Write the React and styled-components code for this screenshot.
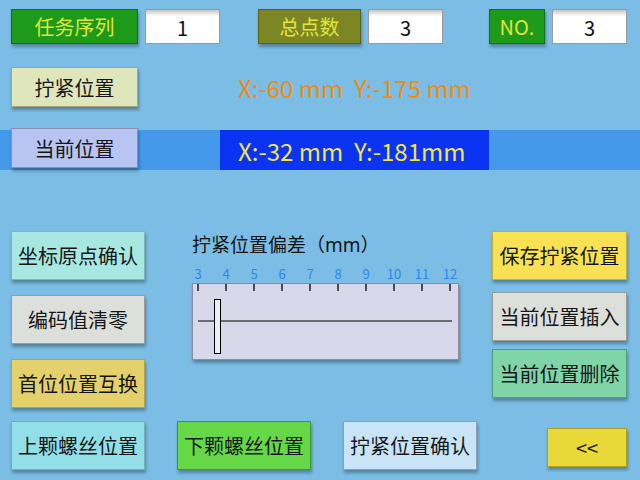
import React from "react";
import styled, { createGlobalStyle } from "styled-components";

const GlobalStyle = createGlobalStyle`
  html, body {
    margin: 0;
    padding: 0;
  }
  body {
    font-family: "Noto Sans CJK SC", "Noto Sans", sans-serif;
  }
`;

const Screen = styled.div`
  width: 640px;
  height: 480px;
  background: #7bbde4;
  overflow: hidden;
  display: flex;
  flex-direction: column;
`;

const TopRow = styled.div`
  display: flex;
  padding: 9px 0 0 11px;
  height: 35px;
`;

const Tag = styled.div`
  width: ${(p) => p.w}px;
  height: 35px;
  box-sizing: border-box;
  margin-left: ${(p) => p.ml || 0}px;
  background: ${(p) => p.bg};
  border: 1px solid ${(p) => p.bd};
  color: #e2e43c;
  font-size: 20px;
  display: flex;
  align-items: center;
  justify-content: center;
  box-shadow: 1px 3px 3px rgba(0, 0, 0, 0.3);
`;

const Field = styled.div`
  width: 75px;
  height: 35px;
  margin-left: 7px;
  box-sizing: border-box;
  border: 1px solid #9a9a9a;
  background: linear-gradient(#c4c4c4, #ffffff 6px);
  color: #111;
  font-size: 20px;
  display: flex;
  align-items: center;
  justify-content: center;
  padding-top: 2px;
`;

const Row = styled.div`
  display: flex;
  align-items: center;
  margin-top: 23px;
  padding-left: 11px;
  height: 40px;
`;

const Button = styled.div`
  width: ${(p) => p.w || 134}px;
  height: ${(p) => p.h || 49}px;
  margin-top: ${(p) => p.mt || 0}px;
  flex-shrink: 0;
  box-sizing: border-box;
  background: ${(p) => p.bg};
  border: 1px solid ${(p) => p.bd || "#9a9a9a"};
  color: #161616;
  font-size: 20px;
  display: flex;
  align-items: center;
  justify-content: center;
  box-shadow: 1px 3px 3px rgba(0, 0, 0, 0.3);
`;

const Coord = styled.div`
  margin-left: 100px;
  color: #f38a12;
  font-size: 24px;
  white-space: pre;
`;

const Band = styled.div`
  display: flex;
  align-items: flex-start;
  margin-top: 23px;
  padding-left: 11px;
  height: 40px;
  background: #4499ea;
`;

const Readout = styled.div`
  margin-left: 82px;
  width: 269px;
  height: 40px;
  box-sizing: border-box;
  padding-left: 18px;
  background: #0b33f2;
  color: #f2e444;
  font-size: 24px;
  display: flex;
  align-items: center;
  white-space: pre;
`;

const Middle = styled.div`
  display: flex;
  margin-top: 61px;
  height: 240px;
`;

const LeftCol = styled.div`
  display: flex;
  flex-direction: column;
  margin-left: 11px;
  width: 134px;
`;

const CenterCol = styled.div`
  display: flex;
  flex-direction: column;
  flex: 1;
`;

const RightCol = styled.div`
  display: flex;
  flex-direction: column;
  align-items: flex-end;
  width: 135px;
  margin-right: 13px;
`;

const Caption = styled.div`
  margin: 0 0 0 47px;
  font-size: 19px;
  line-height: 26px;
  color: #141414;

  span {
    font-family: "Noto Sans", sans-serif;
  }
`;

const Scale = styled.div`
  display: flex;
  margin: 9px 0 0 39px;
`;

const ScaleNum = styled.div`
  width: 28px;
  text-align: center;
  font-size: 13px;
  line-height: 14px;
  color: #2a88ee;
`;

const Panel = styled.div`
  margin: 2px 0 0 47px;
  width: 267px;
  height: 77px;
  box-sizing: border-box;
  background: #d8d8ea;
  border: 1px solid #8c8c9a;
  box-shadow: 1px 3px 3px rgba(0, 0, 0, 0.3);

  svg {
    display: block;
  }
`;

const BottomRow = styled.div`
  display: flex;
  gap: 32px;
  margin-top: auto;
  margin-bottom: 1px;
  padding-left: 32px;
`;

const ticks = [3, 4, 5, 6, 7, 8, 9, 10, 11, 12];

function DeviationSlider() {
  return (
    <>
      <Scale>
        {ticks.map((t) => (
          <ScaleNum key={t}>{t}</ScaleNum>
        ))}
      </Scale>
      <Panel>
        <svg width="265" height="75" viewBox="0 0 265 75">
          {ticks.map((t, i) => (
            <line
              key={t}
              x1={5 + i * 28}
              y1="0"
              x2={5 + i * 28}
              y2="7"
              stroke="#4a4a52"
              strokeWidth="2"
            />
          ))}
          <line x1="5" y1="37" x2="259" y2="37" stroke="#6a6a72" strokeWidth="2" />
          <rect x="21.5" y="15.5" width="6" height="54" fill="#eeeef6" stroke="#000" strokeWidth="1" />
        </svg>
      </Panel>
    </>
  );
}

export default function App() {
  return (
    <Screen>
      <GlobalStyle />
      <TopRow>
        <Tag w={127} bg="#1e9a1a" bd="#14701a">任务序列</Tag>
        <Field>1</Field>
        <Tag w={103} ml={38} bg="#7d8624" bd="#5a6018">总点数</Tag>
        <Field>3</Field>
        <Tag w={56} ml={46} bg="#1e9a1a" bd="#14701a">NO.</Tag>
        <Field>3</Field>
      </TopRow>

      <Row>
        <Button w={127} h={40} bg="#e0e6bc" bd="#a8a47a">拧紧位置</Button>
        <Coord>X:-60 mm  Y:-175 mm</Coord>
      </Row>

      <Band>
        <Button w={127} h={40} mt={-2} bg="#b8c4f2" bd="#8890b4">当前位置</Button>
        <Readout>X:-32 mm  Y:-181mm</Readout>
      </Band>

      <Middle>
        <LeftCol>
          <Button bg="#a8e8e2" bd="#80b4b4">坐标原点确认</Button>
          <Button mt={15} bg="#dddfdb">编码值清零</Button>
          <Button mt={15} bg="#e4d16c" bd="#b0a050">首位位置互换</Button>
          <Button mt={13} bg="#93dfe8" bd="#70b0b8">上颗螺丝位置</Button>
        </LeftCol>

        <CenterCol>
          <Caption>
            拧紧位置偏差（<span>mm</span>）
          </Caption>
          <DeviationSlider />
          <BottomRow>
            <Button bg="#66d848" bd="#3a9a30">下颗螺丝位置</Button>
            <Button bg="#c8e4f6" bd="#90a0b4">拧紧位置确认</Button>
          </BottomRow>
        </CenterCol>

        <RightCol>
          <Button w={135} bg="#f8e254" bd="#c0b040">保存拧紧位置</Button>
          <Button w={135} mt={12} bg="#dddfdb">当前位置插入</Button>
          <Button w={135} mt={8} bg="#7fd4a8" bd="#50a080">当前位置删除</Button>
          <Button w={80} h={39} mt={30} bg="#e8d838" bd="#b0a020">&lt;&lt;</Button>
        </RightCol>
      </Middle>
    </Screen>
  );
}
